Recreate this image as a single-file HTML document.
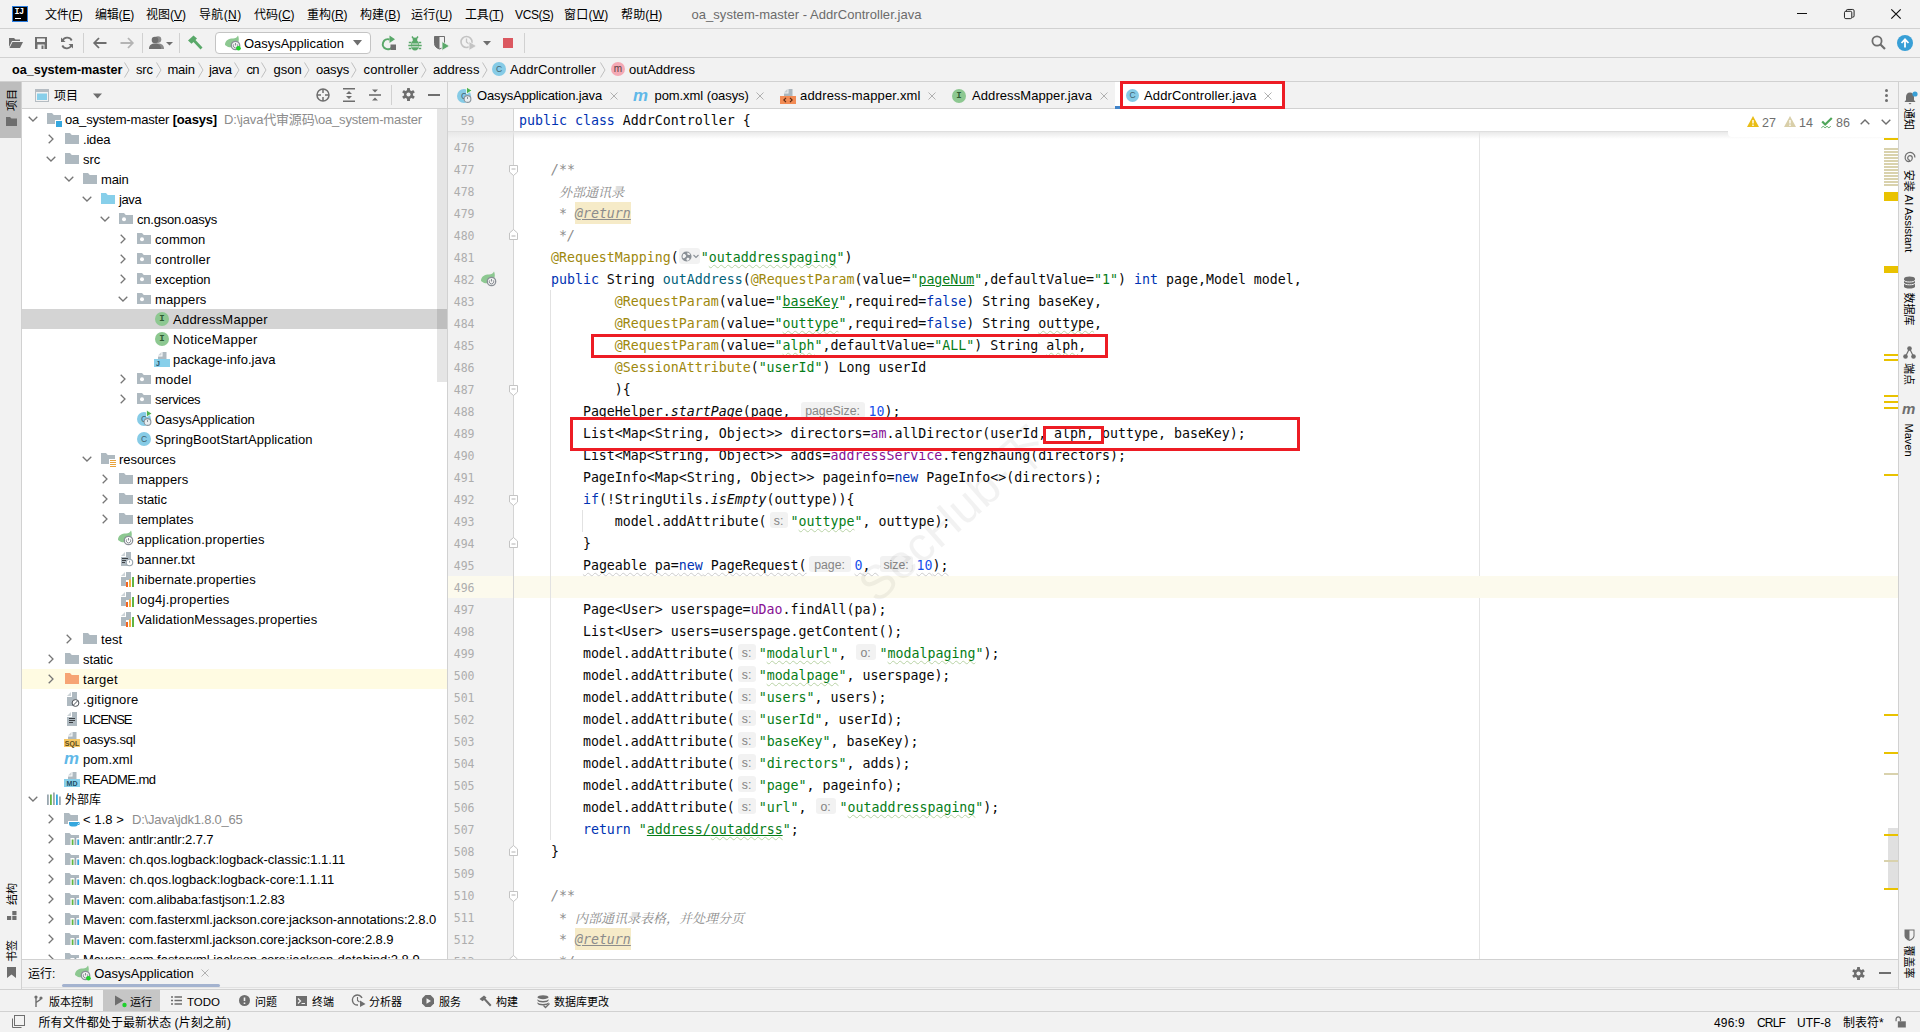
<!DOCTYPE html><html><head><meta charset="utf-8"><title>oa_system-master - AddrController.java</title><style>
*{box-sizing:border-box}
html,body{margin:0;padding:0}
body{width:1920px;height:1032px;overflow:hidden;position:relative;background:#f2f2f2;
 font-family:"Liberation Sans","Noto Sans CJK SC",sans-serif;font-size:12px;color:#000;}
.a{position:absolute}
.t{position:absolute;white-space:pre;line-height:20px;height:20px}
.ui{font-size:13px}
.hl{position:absolute;background:#d1d1d1}
.vl{position:absolute;background:#d1d1d1;width:1px}
svg{position:absolute;overflow:visible}
.row{position:absolute;left:22px;width:426px;height:20px}
.mono{font-family:"Liberation Mono","Noto Sans CJK SC",monospace}
.cl{position:absolute;left:519px;height:22px;line-height:22px;white-space:pre;font-family:"DejaVu Sans Mono","Liberation Mono","Noto Sans CJK SC",monospace;font-size:13.288px;color:#080808;margin-top:1px}
.lnum{position:absolute;left:448px;width:26.500px;text-align:right;height:22px;line-height:22px;font-family:"DejaVu Sans Mono","Liberation Mono",monospace;font-size:11.5px;color:#adadad;white-space:pre;margin-top:1px}
.k{color:#0033b3}.s{color:#067d17}.an{color:#9e880d}.f{color:#871094}.c{color:#8c8c8c;font-style:italic}.n{color:#1750eb}.m{color:#00627a}
.i{font-style:italic}
.u{text-decoration:underline}
.w{text-decoration:underline wavy #b9d3a6;text-decoration-thickness:1px;text-underline-offset:1.500px;text-decoration-skip-ink:none}
.wg{text-decoration:underline wavy #cccccc;text-decoration-thickness:1px;text-underline-offset:1.500px;text-decoration-skip-ink:none}
.hint{display:inline-block;vertical-align:top;height:22px;position:relative}
.hint b{position:absolute;top:1px;height:16px;line-height:19px;background:#f2f2f2;border-radius:3px;color:#858585;font-weight:normal;font-family:"Liberation Sans",sans-serif;font-size:12.300px;text-align:center;font-style:normal}
.red{position:absolute;border:3px solid #ed1c24}
.vt{position:absolute;white-space:pre;writing-mode:vertical-rl;font-size:12px;line-height:22px;width:22px;text-align:left}
</style></head><body>
<div class="a" style="left:0;top:0;width:1920px;height:28px;background:#f2f2f2"></div>
<div class="hl" style="left:0;top:28px;width:1920px;height:1px"></div>
<div class="a" style="left:12px;top:6px;width:16px;height:16px;background:#000;border:1px solid #2b7de0"></div>
<div class="a" style="left:14.500px;top:8px;font-family:'Liberation Mono',monospace;font-size:8.500px;line-height:8px;color:#fff;font-weight:bold;letter-spacing:-0.500px">IJ</div>
<div class="a" style="left:15px;top:18px;width:6px;height:1px;background:#fff"></div>
<div class="t " style="left:45px;top:4.9px;font-size:12px;letter-spacing:-0.369px">文件(<u>F</u>)</div>
<div class="t " style="left:95px;top:4.9px;font-size:12px;letter-spacing:-0.203px">编辑(<u>E</u>)</div>
<div class="t " style="left:146px;top:4.9px;font-size:12px;letter-spacing:-0.003px">视图(<u>V</u>)</div>
<div class="t " style="left:199px;top:4.9px;font-size:12px;letter-spacing:0.366px">导航(<u>N</u>)</div>
<div class="t " style="left:254px;top:4.9px;font-size:12px;letter-spacing:-0.034px">代码(<u>C</u>)</div>
<div class="t " style="left:307px;top:4.9px;font-size:12px;letter-spacing:-0.034px">重构(<u>R</u>)</div>
<div class="t " style="left:360px;top:4.9px;font-size:12px;letter-spacing:0.097px">构建(<u>B</u>)</div>
<div class="t " style="left:411px;top:4.9px;font-size:12px;letter-spacing:0.166px">运行(<u>U</u>)</div>
<div class="t " style="left:465px;top:4.9px;font-size:12px;letter-spacing:-0.169px">工具(<u>T</u>)</div>
<div class="t " style="left:515px;top:4.9px;font-size:12px;letter-spacing:-0.365px">VCS(<u>S</u>)</div>
<div class="t " style="left:564px;top:4.9px;font-size:12px;letter-spacing:0.234px">窗口(<u>W</u>)</div>
<div class="t " style="left:621px;top:4.9px;font-size:12px;letter-spacing:0.166px">帮助(<u>H</u>)</div>
<div class="t " style="left:691.5px;top:5px;font-size:13px;color:#6b6b6b;letter-spacing:0.044px">oa_system-master - AddrController.java</div>
<div class="a" style="left:1797px;top:13px;width:10px;height:1px;background:#111"></div>
<svg style="left:1843.5px;top:8.500px" width="11" height="11" viewBox="0 0 12 12"><rect x="0.5" y="2.5" width="8" height="8" rx="1.5" fill="none" stroke="#111"/><path d="M2.5 2.5V2a1.5 1.5 0 0 1 1.5-1.5h5.5A1.5 1.5 0 0 1 11 2v5.5A1.5 1.5 0 0 1 9.5 9H9" fill="none" stroke="#111"/></svg>
<svg style="left:1891px;top:9px" width="10" height="10" viewBox="0 0 10 10"><path d="M0.3 0.3L9.7 9.7M9.7 0.3L0.3 9.7" stroke="#111" stroke-width="1.2"/></svg>
<div class="hl" style="left:0;top:57px;width:1920px;height:1px"></div>
<svg style="left:9px;top:37px" width="14" height="12" viewBox="0 0 14 12"><path d="M0 1h5l1.5 1.5H11V4H3L0 10z" fill="#6e6e6e"/><path d="M3.5 5H14l-3 6H0.5z" fill="#6e6e6e"/></svg>
<svg style="left:35px;top:37px" width="12" height="12" viewBox="0 0 12 12"><path d="M0 0h12v12H0z M2 1.5v3.5h8V1.5z M2.5 7.5V12h7V7.5z" fill="#6e6e6e" fill-rule="evenodd"/><rect x="6.5" y="8.5" width="2" height="3.5" fill="#6e6e6e"/></svg>
<svg style="left:60px;top:36px;transform:scaleX(-1)" width="14" height="14" viewBox="0 0 14 14"><path d="M11.5 5A5 5 0 0 0 2.3 4.5" fill="none" stroke="#6e6e6e" stroke-width="1.8"/><path d="M2.5 9A5 5 0 0 0 11.7 9.5" fill="none" stroke="#6e6e6e" stroke-width="1.8"/><path d="M13 1.5V6H8.5z" fill="#6e6e6e"/><path d="M1 12.5V8h4.5z" fill="#6e6e6e"/></svg>
<div class="vl" style="left:83px;top:33px;height:20px"></div>
<svg style="left:93px;top:37px" width="14" height="12" viewBox="0 0 14 12"><path d="M6 1L1.2 6L6 11M1.5 6H13.5" fill="none" stroke="#6e6e6e" stroke-width="1.8"/></svg>
<svg style="left:120px;top:37px" width="14" height="12" viewBox="0 0 14 12"><path d="M8 1L12.8 6L8 11M12.5 6H0.5" fill="none" stroke="#b4b4b4" stroke-width="1.8"/></svg>
<div class="vl" style="left:142px;top:33px;height:20px"></div>
<svg style="left:149px;top:36px" width="26" height="13" viewBox="0 0 26 13"><circle cx="9" cy="3.6" r="3.3" fill="#8a8a8a"/><path d="M3 13c0-4 2.5-5.5 6-5.5s6 1.5 6 5.5z" fill="#8a8a8a"/><circle cx="6" cy="4" r="3.3" fill="#6e6e6e"/><path d="M0 13c0-4 2.5-5.5 6-5.5s6 1.5 6 5.5z" fill="#6e6e6e"/><path d="M17 6h7l-3.5 3.5z" fill="#6e6e6e"/></svg>
<div class="vl" style="left:179px;top:33px;height:20px"></div>
<svg style="left:187px;top:35px" width="17" height="16" viewBox="0 0 17 16"><path d="M1 5.5L6.5 0.5L10 3.5L8.5 5L15.5 12.5L13.5 14.5L6.5 7L4.5 8.8z" fill="#59a869"/></svg>
<div class="a" style="left:215px;top:32px;width:156px;height:22px;background:#fff;border:1px solid #c4c4c4;border-radius:4px"></div>
<svg style="left:224px;top:35px" width="18" height="16" viewBox="0 0 18 16"><path d="M1 10C1 5 5 3.5 9 3.5C11.5 3.5 13 2.5 14 0.5C15.5 4 15 8 12 10.5C9 13 4 12.5 2.5 11z" fill="#8dc891"/><circle cx="11.5" cy="10.5" r="4.2" fill="#f2f2f2" stroke="#8a8f96" stroke-width="1.3"/><path d="M11.5 8v2.5M9.8 9.3a2.2 2.2 0 1 0 3.4 0" fill="none" stroke="#8a8f96" stroke-width="1"/><circle cx="14.5" cy="13.2" r="2.3" fill="#1fd12c"/></svg>
<div class="t " style="left:244px;top:34px;font-size:13px;letter-spacing:-0.028px">OasysApplication</div>
<svg style="left:353px;top:40px" width="9" height="6" viewBox="0 0 9 6"><path d="M0 0h9L4.5 5.5z" fill="#6e6e6e"/></svg>
<svg style="left:382px;top:35px" width="15" height="15" viewBox="0 0 15 15"><path d="M9 3.5A5 5 0 1 0 12 10" fill="none" stroke="#59a869" stroke-width="2" transform="translate(-1.5,1)"/><path d="M7.5 0L13 3.8L7.5 7.5z" fill="#59a869" transform="translate(0,0.5)"/><rect x="8.5" y="9.5" width="5.5" height="5.5" fill="#6e6e6e"/></svg>
<svg style="left:408px;top:35.500px" width="14" height="15" viewBox="0 0 14 15"><path d="M4 0.500L5.800 3M10 0.500L8.200 3" stroke="#59a869" stroke-width="1.400"/><circle cx="7" cy="4" r="2.400" fill="#59a869"/><ellipse cx="7" cy="9.300" rx="4.200" ry="5.200" fill="#59a869"/><path d="M0.800 6.500h2.500M10.700 6.500h2.500M0.300 9.500h2.700M11 9.500h2.700M0.800 12.500h2.500M10.700 12.500h2.500" stroke="#59a869" stroke-width="1.500"/><path d="M3.600 8h6.800M3.300 10.800h7.400" stroke="#f2f2f2" stroke-width="0.900"/></svg>
<svg style="left:434px;top:35px" width="16" height="16" viewBox="0 0 16 16"><path d="M0.5 1.5h10v7c0 3-2.5 4.8-5 5.5c-2.5-0.7-5-2.5-5-5.5z" fill="#6e6e6e"/><path d="M5.5 1.5h5v7c0 3-2.5 4.8-5 5.5z" fill="#f2f2f2"/><path d="M0.5 1.5h10v7c0 3-2.5 4.8-5 5.5c-2.5-0.7-5-2.5-5-5.5z" fill="none" stroke="#6e6e6e" stroke-width="1"/><path d="M8 6.5L15.5 11L8 15.5z" fill="#59a869" stroke="#f2f2f2" stroke-width="0.8"/></svg>
<svg style="left:460px;top:35px" width="17" height="16" viewBox="0 0 17 16"><circle cx="6.5" cy="7" r="5.5" fill="none" stroke="#c3c3c3" stroke-width="1.6"/><path d="M6.5 3.5V7L9 9" fill="none" stroke="#c3c3c3" stroke-width="1.3"/><path d="M9 6.5L16.5 11L9 15.5z" fill="#c3c3c3" stroke="#f2f2f2" stroke-width="0.8"/></svg>
<svg style="left:483px;top:41px" width="8" height="5" viewBox="0 0 8 5"><path d="M0 0h8L4 4.5z" fill="#6e6e6e"/></svg>
<div class="a" style="left:503px;top:38px;width:10px;height:10px;background:#db5860"></div>
<div class="vl" style="left:524px;top:33px;height:20px"></div>
<svg style="left:1871px;top:35px" width="15" height="15" viewBox="0 0 15 15"><circle cx="6" cy="6" r="4.6" fill="none" stroke="#6e6e6e" stroke-width="1.8"/><path d="M9.5 9.5L14 14" stroke="#6e6e6e" stroke-width="2.2"/></svg>
<svg style="left:1897px;top:35px" width="16" height="16" viewBox="0 0 16 16"><circle cx="8" cy="8" r="8" fill="#389fd6"/><path d="M8 12.5V4.5M4.5 8L8 4.3L11.5 8" fill="none" stroke="#fff" stroke-width="1.8"/></svg>
<div class="hl" style="left:0;top:81px;width:1920px;height:1px"></div>
<div class="t " style="left:12px;top:60px;font-size:12.6px;font-weight:bold;letter-spacing:-0.019px">oa_system-master</div>
<div class="t " style="left:136px;top:60px;font-size:13px;letter-spacing:-0.181px">src</div>
<div class="t " style="left:167.5px;top:60px;font-size:13px;letter-spacing:-0.247px">main</div>
<div class="t " style="left:209px;top:60px;font-size:13px;letter-spacing:-0.315px">java</div>
<div class="t " style="left:246.5px;top:60px;font-size:13px;letter-spacing:-0.667px">cn</div>
<div class="t " style="left:273.5px;top:60px;font-size:13px;letter-spacing:0.024px">gson</div>
<div class="t " style="left:316px;top:60px;font-size:13px;letter-spacing:-0.194px">oasys</div>
<div class="t " style="left:363.5px;top:60px;font-size:13px;letter-spacing:0.153px">controller</div>
<div class="t " style="left:433px;top:60px;font-size:13px;letter-spacing:0.021px">address</div>
<svg style="left:124px;top:62px" width="6" height="16" viewBox="0 0 6 16"><path d="M0.5 0.5L5 8L0.5 15.5" fill="none" stroke="#c0c0c0" stroke-width="1"/></svg>
<svg style="left:156px;top:62px" width="6" height="16" viewBox="0 0 6 16"><path d="M0.5 0.5L5 8L0.5 15.5" fill="none" stroke="#c0c0c0" stroke-width="1"/></svg>
<svg style="left:198px;top:62px" width="6" height="16" viewBox="0 0 6 16"><path d="M0.5 0.5L5 8L0.5 15.5" fill="none" stroke="#c0c0c0" stroke-width="1"/></svg>
<svg style="left:234px;top:62px" width="6" height="16" viewBox="0 0 6 16"><path d="M0.5 0.5L5 8L0.5 15.5" fill="none" stroke="#c0c0c0" stroke-width="1"/></svg>
<svg style="left:261px;top:62px" width="6" height="16" viewBox="0 0 6 16"><path d="M0.5 0.5L5 8L0.5 15.5" fill="none" stroke="#c0c0c0" stroke-width="1"/></svg>
<svg style="left:304px;top:62px" width="6" height="16" viewBox="0 0 6 16"><path d="M0.5 0.5L5 8L0.5 15.5" fill="none" stroke="#c0c0c0" stroke-width="1"/></svg>
<svg style="left:351px;top:62px" width="6" height="16" viewBox="0 0 6 16"><path d="M0.5 0.5L5 8L0.5 15.5" fill="none" stroke="#c0c0c0" stroke-width="1"/></svg>
<svg style="left:421px;top:62px" width="6" height="16" viewBox="0 0 6 16"><path d="M0.5 0.5L5 8L0.5 15.5" fill="none" stroke="#c0c0c0" stroke-width="1"/></svg>
<svg style="left:482px;top:62px" width="6" height="16" viewBox="0 0 6 16"><path d="M0.5 0.5L5 8L0.5 15.5" fill="none" stroke="#c0c0c0" stroke-width="1"/></svg>
<svg style="left:600px;top:62px" width="6" height="16" viewBox="0 0 6 16"><path d="M0.5 0.5L5 8L0.5 15.5" fill="none" stroke="#c0c0c0" stroke-width="1"/></svg>
<div class="a" style="left:492px;top:62px;width:14px;height:14px;border-radius:50%;background:#86cbe6;color:#41626f;font-family:'Liberation Sans',monospace;font-size:8.5px;line-height:14px;text-align:center;font-weight:normal">C</div>
<div class="t " style="left:510px;top:60px;font-size:13px;letter-spacing:0.155px">AddrController</div>
<div class="a" style="left:611px;top:62px;width:14px;height:14px;border-radius:50%;background:#f4a9b4;color:#5a3f45;font-family:'Liberation Sans',monospace;font-size:10px;line-height:14px;text-align:center;font-weight:normal">m</div>
<div class="t " style="left:629px;top:60px;font-size:13px;letter-spacing:0.023px">outAddress</div>
<div class="a" style="left:0;top:82px;width:22px;height:905px;background:#f2f2f2"></div>
<div class="vl" style="left:21px;top:82px;height:907px"></div>
<div class="a" style="left:0;top:82px;width:21px;height:56px;background:#bdbdbd"></div>
<div class="a" style="left:0px;top:85px;width:22px;height:30px"><div class="a" style="left:11.5px;top:15px;transform:translate(-50%,-50%) rotate(-90deg);white-space:pre;font-size:11px;line-height:14px">项目</div></div>
<svg style="left:6px;top:117px" width="11" height="9" viewBox="0 0 11 9"><path d="M0 0h4l1.5 1.5H11V9H0z" fill="#6e6e6e"/></svg>
<div class="a" style="left:0px;top:880px;width:22px;height:28px"><div class="a" style="left:12.300px;top:14px;transform:translate(-50%,-50%) rotate(-90deg);white-space:pre;font-size:11px;line-height:14px">结构</div></div>
<svg style="left:7px;top:911px" width="10" height="9" viewBox="0 0 10 9"><rect x="5.300" y="0" width="4.200" height="4.200" fill="#6e6e6e"/><rect x="0" y="5" width="4.200" height="4" fill="#6e6e6e"/><rect x="5.300" y="5" width="4.200" height="4" fill="#6e6e6e"/></svg>
<div class="a" style="left:0px;top:937px;width:22px;height:28px"><div class="a" style="left:12.300px;top:14px;transform:translate(-50%,-50%) rotate(-90deg);white-space:pre;font-size:11px;line-height:14px">书签</div></div>
<svg style="left:7px;top:967px" width="9" height="11" viewBox="0 0 9 11"><path d="M0 0h9v11L4.5 7.5L0 11z" fill="#6e6e6e"/></svg>
<div class="a" style="left:22px;top:82px;width:426px;height:27px;background:#f2f2f2"></div>
<div class="hl" style="left:22px;top:108px;width:426px;height:1px"></div>
<div class="a" style="left:22px;top:109px;width:425px;height:851px;background:#fff"></div>
<div class="vl" style="left:447px;top:82px;height:878px"></div>
<svg style="left:35px;top:89px" width="14" height="13" viewBox="0 0 14 13"><rect x="0.5" y="0.5" width="13" height="12" fill="#f2f2f2" stroke="#b5bcc2"/><rect x="0" y="0" width="14" height="3" fill="#b5bcc2"/><rect x="2" y="4.5" width="10" height="6.5" fill="#87cfea"/></svg>
<div class="t " style="left:54px;top:86px;font-size:12px">项目</div>
<svg style="left:93px;top:93px" width="9" height="6" viewBox="0 0 9 6"><path d="M0 0.5h9L4.5 5.5z" fill="#6e6e6e"/></svg>
<svg style="left:316px;top:88px" width="14" height="14" viewBox="0 0 14 14"><circle cx="7" cy="7" r="6" fill="none" stroke="#6e6e6e" stroke-width="1.5"/><path d="M7 1v4M7 9v4M1 7h4M9 7h4" stroke="#6e6e6e" stroke-width="1.5"/></svg>
<svg style="left:343px;top:88px" width="12" height="14" viewBox="0 0 12 14"><path d="M0 0.8h12M0 13.2h12" stroke="#6e6e6e" stroke-width="1.6"/><path d="M3 6L6 3L9 6zM3 8L6 11L9 8z" fill="#6e6e6e"/></svg>
<svg style="left:369px;top:88px" width="12" height="14" viewBox="0 0 12 14"><path d="M0 7h12" stroke="#6e6e6e" stroke-width="1.6"/><path d="M3 1.5L6 4.5L9 1.5zM3 12.5L6 9.5L9 12.5z" fill="#6e6e6e"/></svg>
<div class="vl" style="left:391px;top:85px;height:20px"></div>
<svg style="left:402px;top:88px" width="13" height="13" viewBox="0 0 14 14"><g fill="#6e6e6e"><circle cx="7" cy="7" r="4.8"/><rect x="5.4" y="0" width="3.2" height="14" rx="0.6" transform="rotate(0 7 7)"/><rect x="5.4" y="0" width="3.2" height="14" rx="0.6" transform="rotate(60 7 7)"/><rect x="5.4" y="0" width="3.2" height="14" rx="0.6" transform="rotate(120 7 7)"/></g><circle cx="7" cy="7" r="2.2" fill="#f2f2f2"/></svg>
<div class="a" style="left:428px;top:94px;width:12px;height:2px;background:#6e6e6e"></div>
<div class="a" id="tree" style="left:0;top:0;width:448px;height:959px;overflow:hidden">
<svg style="left:28px;top:116px" width="10" height="6" viewBox="0 0 10 6"><path d="M0.7 0.7L5 5L9.3 0.7" fill="none" stroke="#767676" stroke-width="1.3"/></svg>
<svg style="left:47px;top:113px" width="14" height="11" viewBox="0 0 14 11"><path d="M0 0h5l1.8 2H14v9H0z" fill="#aeb9c0"/></svg><div class="a" style="left:55px;top:120px;width:7px;height:7px;background:#fff"></div><div class="a" style="left:56px;top:121px;width:6px;height:6px;background:#35a7de"></div>
<div class="t " style="left:65px;top:110px;font-size:13px;letter-spacing:-0.17px">oa_system-master <b>[oasys]</b></div>
<div class="t " style="left:224px;top:110px;font-size:13px;color:#8c8c8c;letter-spacing:-0.179px">D:\java代审源码\oa_system-master</div>
<svg style="left:48px;top:134px" width="6" height="10" viewBox="0 0 6 10"><path d="M0.7 0.7L5 5L0.7 9.3" fill="none" stroke="#767676" stroke-width="1.3"/></svg>
<svg style="left:65px;top:133px" width="14" height="11" viewBox="0 0 14 11"><path d="M0 0h5l1.8 2H14v9H0z" fill="#aeb9c0"/></svg>
<div class="t " style="left:83px;top:130px;font-size:13px;letter-spacing:-0.201px">.idea</div>
<svg style="left:46px;top:156px" width="10" height="6" viewBox="0 0 10 6"><path d="M0.7 0.7L5 5L9.3 0.7" fill="none" stroke="#767676" stroke-width="1.3"/></svg>
<svg style="left:65px;top:153px" width="14" height="11" viewBox="0 0 14 11"><path d="M0 0h5l1.8 2H14v9H0z" fill="#aeb9c0"/></svg>
<div class="t " style="left:83px;top:150px;font-size:13px;letter-spacing:-0.081px">src</div>
<svg style="left:64px;top:176px" width="10" height="6" viewBox="0 0 10 6"><path d="M0.7 0.7L5 5L9.3 0.7" fill="none" stroke="#767676" stroke-width="1.3"/></svg>
<svg style="left:83px;top:173px" width="14" height="11" viewBox="0 0 14 11"><path d="M0 0h5l1.8 2H14v9H0z" fill="#aeb9c0"/></svg>
<div class="t " style="left:101px;top:170px;font-size:13px;letter-spacing:-0.172px">main</div>
<svg style="left:82px;top:196px" width="10" height="6" viewBox="0 0 10 6"><path d="M0.7 0.7L5 5L9.3 0.7" fill="none" stroke="#767676" stroke-width="1.3"/></svg>
<svg style="left:101px;top:193px" width="14" height="11" viewBox="0 0 14 11"><path d="M0 0h5l1.8 2H14v9H0z" fill="#87cfea"/></svg>
<div class="t " style="left:119px;top:190px;font-size:13px;letter-spacing:-0.39px">java</div>
<svg style="left:100px;top:216px" width="10" height="6" viewBox="0 0 10 6"><path d="M0.7 0.7L5 5L9.3 0.7" fill="none" stroke="#767676" stroke-width="1.3"/></svg>
<svg style="left:119px;top:213px" width="14" height="11" viewBox="0 0 14 11"><path d="M0 0h5l1.8 2H14v9H0z" fill="#aeb9c0"/><circle cx="5" cy="6.3" r="2" fill="#fff"/></svg>
<div class="t " style="left:137px;top:210px;font-size:13px;letter-spacing:-0.231px">cn.gson.oasys</div>
<svg style="left:120px;top:234px" width="6" height="10" viewBox="0 0 6 10"><path d="M0.7 0.7L5 5L0.7 9.3" fill="none" stroke="#767676" stroke-width="1.3"/></svg>
<svg style="left:137px;top:233px" width="14" height="11" viewBox="0 0 14 11"><path d="M0 0h5l1.8 2H14v9H0z" fill="#aeb9c0"/><circle cx="5" cy="6.3" r="2" fill="#fff"/></svg>
<div class="t " style="left:155px;top:230px;font-size:13px;letter-spacing:0.073px">common</div>
<svg style="left:120px;top:254px" width="6" height="10" viewBox="0 0 6 10"><path d="M0.7 0.7L5 5L0.7 9.3" fill="none" stroke="#767676" stroke-width="1.3"/></svg>
<svg style="left:137px;top:253px" width="14" height="11" viewBox="0 0 14 11"><path d="M0 0h5l1.8 2H14v9H0z" fill="#aeb9c0"/><circle cx="5" cy="6.3" r="2" fill="#fff"/></svg>
<div class="t " style="left:155px;top:250px;font-size:13px;letter-spacing:0.213px">controller</div>
<svg style="left:120px;top:274px" width="6" height="10" viewBox="0 0 6 10"><path d="M0.7 0.7L5 5L0.7 9.3" fill="none" stroke="#767676" stroke-width="1.3"/></svg>
<svg style="left:137px;top:273px" width="14" height="11" viewBox="0 0 14 11"><path d="M0 0h5l1.8 2H14v9H0z" fill="#aeb9c0"/><circle cx="5" cy="6.3" r="2" fill="#fff"/></svg>
<div class="t " style="left:155px;top:270px;font-size:13px;letter-spacing:-0.006px">exception</div>
<svg style="left:118px;top:296px" width="10" height="6" viewBox="0 0 10 6"><path d="M0.7 0.7L5 5L9.3 0.7" fill="none" stroke="#767676" stroke-width="1.3"/></svg>
<svg style="left:137px;top:293px" width="14" height="11" viewBox="0 0 14 11"><path d="M0 0h5l1.8 2H14v9H0z" fill="#aeb9c0"/><circle cx="5" cy="6.3" r="2" fill="#fff"/></svg>
<div class="t " style="left:155px;top:290px;font-size:13px;letter-spacing:0.132px">mappers</div>
<div class="a" style="left:22px;top:309px;width:425px;height:20px;background:#d4d4d4"></div>
<div class="a" style="left:155px;top:312px;width:14px;height:14px;border-radius:50%;background:#8dc891;color:#2d5c33;font-family:'Liberation Mono',monospace;font-size:9px;line-height:14px;text-align:center;font-weight:bold">I</div>
<div class="t " style="left:173px;top:310px;font-size:13px;letter-spacing:0.24px">AddressMapper</div>
<div class="a" style="left:155px;top:332px;width:14px;height:14px;border-radius:50%;background:#8dc891;color:#2d5c33;font-family:'Liberation Mono',monospace;font-size:9px;line-height:14px;text-align:center;font-weight:bold">I</div>
<div class="t " style="left:173px;top:330px;font-size:13px;letter-spacing:0.314px">NoticeMapper</div>
<svg style="left:154px;top:351px" width="16" height="16" viewBox="0 0 16 16"><path d="M8.500 1h4v7H4V5.500h4.500z" fill="#9aa7b0" opacity="0.8"/><path d="M7.500 1L4 4.500h3.500z" fill="#9aa7b0" opacity="0.5"/><rect x="0" y="8" width="16" height="8" fill="#87cfea"/><text x="4" y="15" font-family="Liberation Sans,sans-serif" font-size="7" font-weight="bold" fill="#1f4e66" text-anchor="middle">J</text></svg>
<div class="t " style="left:173px;top:350px;font-size:13px;letter-spacing:0.041px">package-info.java</div>
<svg style="left:120px;top:374px" width="6" height="10" viewBox="0 0 6 10"><path d="M0.7 0.7L5 5L0.7 9.3" fill="none" stroke="#767676" stroke-width="1.3"/></svg>
<svg style="left:137px;top:373px" width="14" height="11" viewBox="0 0 14 11"><path d="M0 0h5l1.8 2H14v9H0z" fill="#aeb9c0"/><circle cx="5" cy="6.3" r="2" fill="#fff"/></svg>
<div class="t " style="left:155px;top:370px;font-size:13px;letter-spacing:0.236px">model</div>
<svg style="left:120px;top:394px" width="6" height="10" viewBox="0 0 6 10"><path d="M0.7 0.7L5 5L0.7 9.3" fill="none" stroke="#767676" stroke-width="1.3"/></svg>
<svg style="left:137px;top:393px" width="14" height="11" viewBox="0 0 14 11"><path d="M0 0h5l1.8 2H14v9H0z" fill="#aeb9c0"/><circle cx="5" cy="6.3" r="2" fill="#fff"/></svg>
<div class="t " style="left:155px;top:390px;font-size:13px;letter-spacing:-0.298px">services</div>
<div class="a" style="left:137px;top:411.5px;width:14px;height:14px;border-radius:50%;background:#86cbe6;color:#41626f;font-family:'Liberation Sans',monospace;font-size:8.5px;line-height:14px;text-align:center;font-weight:normal">C</div><svg style="left:142px;top:410px" width="11" height="18" viewBox="0 0 11 18"><path d="M4.5 0L10 3.5L4.5 7z" fill="#4fb04f" stroke="#fff" stroke-width="0.8"/><circle cx="5.5" cy="12" r="3.4" fill="#e9eef1" stroke="#8a949c" stroke-width="1.1"/><path d="M5.5 10v2" stroke="#8a949c"/></svg>
<div class="t " style="left:155px;top:410px;font-size:13px;letter-spacing:-0.041px">OasysApplication</div>
<div class="a" style="left:137px;top:431.5px;width:14px;height:14px;border-radius:50%;background:#86cbe6;color:#41626f;font-family:'Liberation Sans',monospace;font-size:8.5px;line-height:14px;text-align:center;font-weight:normal">C</div>
<div class="t " style="left:155px;top:430px;font-size:13px;letter-spacing:0.082px">SpringBootStartApplication</div>
<svg style="left:82px;top:456px" width="10" height="6" viewBox="0 0 10 6"><path d="M0.7 0.7L5 5L9.3 0.7" fill="none" stroke="#767676" stroke-width="1.3"/></svg>
<svg style="left:101px;top:453px" width="14" height="11" viewBox="0 0 14 11"><path d="M0 0h5l1.8 2H14v9H0z" fill="#aeb9c0"/></svg><svg style="left:109px;top:459px" width="7" height="8" viewBox="0 0 7 8"><rect width="7" height="8" fill="#fff"/><path d="M1 1.5h6M1 3.5h6M1 5.5h6M1 7.5h6" stroke="#e8a33d" stroke-width="1"/></svg>
<div class="t " style="left:119px;top:450px;font-size:13px;letter-spacing:-0.053px">resources</div>
<svg style="left:102px;top:474px" width="6" height="10" viewBox="0 0 6 10"><path d="M0.7 0.7L5 5L0.7 9.3" fill="none" stroke="#767676" stroke-width="1.3"/></svg>
<svg style="left:119px;top:473px" width="14" height="11" viewBox="0 0 14 11"><path d="M0 0h5l1.8 2H14v9H0z" fill="#aeb9c0"/></svg>
<div class="t " style="left:137px;top:470px;font-size:13px;letter-spacing:0.103px">mappers</div>
<svg style="left:102px;top:494px" width="6" height="10" viewBox="0 0 6 10"><path d="M0.7 0.7L5 5L0.7 9.3" fill="none" stroke="#767676" stroke-width="1.3"/></svg>
<svg style="left:119px;top:493px" width="14" height="11" viewBox="0 0 14 11"><path d="M0 0h5l1.8 2H14v9H0z" fill="#aeb9c0"/></svg>
<div class="t " style="left:137px;top:490px;font-size:13px;letter-spacing:-0.091px">static</div>
<svg style="left:102px;top:514px" width="6" height="10" viewBox="0 0 6 10"><path d="M0.7 0.7L5 5L0.7 9.3" fill="none" stroke="#767676" stroke-width="1.3"/></svg>
<svg style="left:119px;top:513px" width="14" height="11" viewBox="0 0 14 11"><path d="M0 0h5l1.8 2H14v9H0z" fill="#aeb9c0"/></svg>
<div class="t " style="left:137px;top:510px;font-size:13px;letter-spacing:0.014px">templates</div>
<svg style="left:117px;top:530px" width="18" height="16" viewBox="0 0 18 16"><path d="M1 10C1 5 5 3.5 9 3.5C11.5 3.5 13 2.5 14 0.5C15.5 4 15 8 12 10.5C9 13 4 12.5 2.5 11z" fill="#8dc891"/><circle cx="11.5" cy="10.5" r="4.2" fill="#fff" stroke="#8a8f96" stroke-width="1.3"/><path d="M11.5 8v2.5M9.8 9.3a2.2 2.2 0 1 0 3.4 0" fill="none" stroke="#8a8f96" stroke-width="1"/></svg>
<div class="t " style="left:137px;top:530px;font-size:13px;letter-spacing:0.187px">application.properties</div>
<svg style="left:118px;top:551px" width="16" height="16" viewBox="0 0 16 16"><path d="M8 1h5v14H3V6h5z" fill="#9aa7b0" opacity="0.8"/><path d="M7 1L3 5h4z" fill="#9aa7b0" opacity="0.5"/><path d="M4 7.500h6M4 9.500h4M4 11.500h3" stroke="#3b3f44" stroke-width="1"/><circle cx="11.5" cy="11.5" r="3.2" fill="#fff" stroke="#9aa7b0" stroke-width="1.1"/><path d="M11.5 9.8v1.8" stroke="#9aa7b0"/></svg>
<div class="t " style="left:137px;top:550px;font-size:13px;letter-spacing:0.079px">banner.txt</div>
<svg style="left:118px;top:571px" width="16" height="16" viewBox="0 0 16 16"><path d="M8 1h5v8H8v6H3V6h5z" fill="#9aa7b0" opacity="0.8"/><path d="M7 1L3 5h4z" fill="#9aa7b0" opacity="0.5"/><rect x="8" y="11" width="2" height="5" fill="#f26522"/><rect x="11" y="8.5" width="2" height="7.5" fill="#f4af3d"/><rect x="14" y="6" width="2" height="10" fill="#62b543"/></svg>
<div class="t " style="left:137px;top:570px;font-size:13px;letter-spacing:0.158px">hibernate.properties</div>
<svg style="left:118px;top:591px" width="16" height="16" viewBox="0 0 16 16"><path d="M8 1h5v8H8v6H3V6h5z" fill="#9aa7b0" opacity="0.8"/><path d="M7 1L3 5h4z" fill="#9aa7b0" opacity="0.5"/><rect x="8" y="11" width="2" height="5" fill="#f26522"/><rect x="11" y="8.5" width="2" height="7.5" fill="#f4af3d"/><rect x="14" y="6" width="2" height="10" fill="#62b543"/></svg>
<div class="t " style="left:137px;top:590px;font-size:13px;letter-spacing:0.232px">log4j.properties</div>
<svg style="left:118px;top:611px" width="16" height="16" viewBox="0 0 16 16"><path d="M8 1h5v8H8v6H3V6h5z" fill="#9aa7b0" opacity="0.8"/><path d="M7 1L3 5h4z" fill="#9aa7b0" opacity="0.5"/><rect x="8" y="11" width="2" height="5" fill="#f26522"/><rect x="11" y="8.5" width="2" height="7.5" fill="#f4af3d"/><rect x="14" y="6" width="2" height="10" fill="#62b543"/></svg>
<div class="t " style="left:137px;top:610px;font-size:13px;letter-spacing:0.12px">ValidationMessages.properties</div>
<svg style="left:66px;top:634px" width="6" height="10" viewBox="0 0 6 10"><path d="M0.7 0.7L5 5L0.7 9.3" fill="none" stroke="#767676" stroke-width="1.3"/></svg>
<svg style="left:83px;top:633px" width="14" height="11" viewBox="0 0 14 11"><path d="M0 0h5l1.8 2H14v9H0z" fill="#aeb9c0"/></svg>
<div class="t " style="left:101px;top:630px;font-size:13px;letter-spacing:0.058px">test</div>
<svg style="left:48px;top:654px" width="6" height="10" viewBox="0 0 6 10"><path d="M0.7 0.7L5 5L0.7 9.3" fill="none" stroke="#767676" stroke-width="1.3"/></svg>
<svg style="left:65px;top:653px" width="14" height="11" viewBox="0 0 14 11"><path d="M0 0h5l1.8 2H14v9H0z" fill="#aeb9c0"/></svg>
<div class="t " style="left:83px;top:650px;font-size:13px;letter-spacing:-0.091px">static</div>
<div class="a" style="left:22px;top:669px;width:425px;height:20px;background:#fffbe2"></div>
<svg style="left:48px;top:674px" width="6" height="10" viewBox="0 0 6 10"><path d="M0.7 0.7L5 5L0.7 9.3" fill="none" stroke="#767676" stroke-width="1.3"/></svg>
<svg style="left:65px;top:673px" width="14" height="11" viewBox="0 0 14 11"><path d="M0 0h5l1.8 2H14v9H0z" fill="#f6a474"/></svg>
<div class="t " style="left:83px;top:670px;font-size:13px;letter-spacing:0.275px">target</div>
<svg style="left:64px;top:691px" width="16" height="16" viewBox="0 0 16 16"><path d="M8 1h5v14H3V6h5z" fill="#9aa7b0" opacity="0.8"/><path d="M7 1L3 5h4z" fill="#9aa7b0" opacity="0.5"/><circle cx="11.5" cy="12" r="3.4" fill="#fff" stroke="#4a4f55" stroke-width="1"/><path d="M9.2 14.3L13.8 9.7" stroke="#4a4f55" stroke-width="1"/></svg>
<div class="t " style="left:83px;top:690px;font-size:13px;letter-spacing:0.202px">.gitignore</div>
<svg style="left:64px;top:711px" width="16" height="16" viewBox="0 0 16 16"><path d="M8 1h5v14H3V6h5z" fill="#9aa7b0" opacity="0.8"/><path d="M7 1L3 5h4z" fill="#9aa7b0" opacity="0.5"/><path d="M5 7.500h6M5 9.500h6M5 11.500h4" stroke="#3b3f44" stroke-width="1"/></svg>
<div class="t " style="left:83px;top:710px;font-size:13px;letter-spacing:-1.02px">LICENSE</div>
<svg style="left:64px;top:731px" width="16" height="16" viewBox="0 0 16 16"><path d="M8.500 1h4v7H4V5.500h4.500z" fill="#9aa7b0" opacity="0.8"/><path d="M7.500 1L4 4.500h3.500z" fill="#9aa7b0" opacity="0.5"/><rect x="0" y="8" width="16" height="8" fill="#f4c766"/><text x="8" y="15" font-family="Liberation Sans,sans-serif" font-size="7" font-weight="bold" fill="#5a4a1a" text-anchor="middle">SQL</text></svg>
<div class="t " style="left:83px;top:730px;font-size:13px;letter-spacing:-0.189px">oasys.sql</div>
<svg style="left:64px;top:751px" width="16" height="16" viewBox="0 0 16 16"><text x="0" y="13" font-family="Liberation Sans,sans-serif" font-size="17" font-style="italic" font-weight="bold" fill="#5fb8e8" textLength="15" lengthAdjust="spacingAndGlyphs">m</text></svg>
<div class="t " style="left:83px;top:750px;font-size:13px;letter-spacing:0.082px">pom.xml</div>
<svg style="left:64px;top:771px" width="16" height="16" viewBox="0 0 16 16"><path d="M8.500 1h4v7H4V5.500h4.500z" fill="#9aa7b0" opacity="0.8"/><path d="M7.500 1L4 4.500h3.500z" fill="#9aa7b0" opacity="0.5"/><rect x="0" y="8" width="16" height="8" fill="#87cfea"/><text x="8" y="15" font-family="Liberation Sans,sans-serif" font-size="7" font-weight="bold" fill="#1f4e66" text-anchor="middle">MD</text></svg>
<div class="t " style="left:83px;top:770px;font-size:13px;letter-spacing:-0.533px">README.md</div>
<svg style="left:28px;top:796px" width="10" height="6" viewBox="0 0 10 6"><path d="M0.7 0.7L5 5L9.3 0.7" fill="none" stroke="#767676" stroke-width="1.3"/></svg>
<svg style="left:46px;top:791px" width="16" height="16" viewBox="0 0 16 16"><rect x="1" y="3.500" width="1.800" height="10.500" fill="#9aa7b0"/><rect x="4" y="3.500" width="1.800" height="10.500" fill="#62b543"/><rect x="7" y="1.500" width="1.800" height="12.500" fill="#9aa7b0"/><rect x="10" y="3.500" width="1.800" height="10.500" fill="#35a7de"/><rect x="13" y="5.500" width="1.800" height="8.500" fill="#9aa7b0"/></svg>
<div class="t " style="left:65px;top:790px;font-size:12px;letter-spacing:-0.005px">外部库</div>
<svg style="left:48px;top:814px" width="6" height="10" viewBox="0 0 6 10"><path d="M0.7 0.7L5 5L0.7 9.3" fill="none" stroke="#767676" stroke-width="1.3"/></svg>
<svg style="left:64px;top:811px" width="16" height="16" viewBox="0 0 16 16"><path d="M0 2h5l1.8 2H14v6H4v3H0z" fill="#aeb9c0"/><path d="M5 11h9v1.5a3 3 0 0 1-3 3H8a3 3 0 0 1-3-3z" fill="#35a7de"/><path d="M14 11.5h1.2v2H14" fill="none" stroke="#35a7de" stroke-width="1"/></svg>
<div class="t " style="left:83px;top:810px;font-size:13px;letter-spacing:0.074px">&lt; 1.8 &gt;</div>
<div class="t " style="left:132px;top:810px;font-size:13px;color:#8c8c8c;letter-spacing:-0.232px">D:\Java\jdk1.8.0_65</div>
<svg style="left:48px;top:834px" width="6" height="10" viewBox="0 0 6 10"><path d="M0.7 0.7L5 5L0.7 9.3" fill="none" stroke="#767676" stroke-width="1.3"/></svg>
<svg style="left:64px;top:831px" width="16" height="16" viewBox="0 0 16 16"><path d="M1 2h4.500l1.800 2H15v3H6.500v7H1z" fill="#aeb9c0"/><rect x="7.700" y="8.500" width="1.800" height="5.500" fill="#62b543"/><rect x="10.500" y="6.500" width="1.800" height="7.500" fill="#9aa7b0"/><rect x="13.300" y="8.500" width="1.800" height="5.500" fill="#35a7de"/></svg>
<div class="t " style="left:83px;top:830px;font-size:13px;letter-spacing:-0.103px">Maven: antlr:antlr:2.7.7</div>
<svg style="left:48px;top:854px" width="6" height="10" viewBox="0 0 6 10"><path d="M0.7 0.7L5 5L0.7 9.3" fill="none" stroke="#767676" stroke-width="1.3"/></svg>
<svg style="left:64px;top:851px" width="16" height="16" viewBox="0 0 16 16"><path d="M1 2h4.500l1.800 2H15v3H6.500v7H1z" fill="#aeb9c0"/><rect x="7.700" y="8.500" width="1.800" height="5.500" fill="#62b543"/><rect x="10.500" y="6.500" width="1.800" height="7.500" fill="#9aa7b0"/><rect x="13.300" y="8.500" width="1.800" height="5.500" fill="#35a7de"/></svg>
<div class="t " style="left:83px;top:850px;font-size:13px;letter-spacing:-0.028px">Maven: ch.qos.logback:logback-classic:1.1.11</div>
<svg style="left:48px;top:874px" width="6" height="10" viewBox="0 0 6 10"><path d="M0.7 0.7L5 5L0.7 9.3" fill="none" stroke="#767676" stroke-width="1.3"/></svg>
<svg style="left:64px;top:871px" width="16" height="16" viewBox="0 0 16 16"><path d="M1 2h4.500l1.800 2H15v3H6.500v7H1z" fill="#aeb9c0"/><rect x="7.700" y="8.500" width="1.800" height="5.500" fill="#62b543"/><rect x="10.500" y="6.500" width="1.800" height="7.500" fill="#9aa7b0"/><rect x="13.300" y="8.500" width="1.800" height="5.500" fill="#35a7de"/></svg>
<div class="t " style="left:83px;top:870px;font-size:13px;letter-spacing:0.034px">Maven: ch.qos.logback:logback-core:1.1.11</div>
<svg style="left:48px;top:894px" width="6" height="10" viewBox="0 0 6 10"><path d="M0.7 0.7L5 5L0.7 9.3" fill="none" stroke="#767676" stroke-width="1.3"/></svg>
<svg style="left:64px;top:891px" width="16" height="16" viewBox="0 0 16 16"><path d="M1 2h4.500l1.800 2H15v3H6.500v7H1z" fill="#aeb9c0"/><rect x="7.700" y="8.500" width="1.800" height="5.500" fill="#62b543"/><rect x="10.500" y="6.500" width="1.800" height="7.500" fill="#9aa7b0"/><rect x="13.300" y="8.500" width="1.800" height="5.500" fill="#35a7de"/></svg>
<div class="t " style="left:83px;top:890px;font-size:13px;letter-spacing:-0.083px">Maven: com.alibaba:fastjson:1.2.83</div>
<svg style="left:48px;top:914px" width="6" height="10" viewBox="0 0 6 10"><path d="M0.7 0.7L5 5L0.7 9.3" fill="none" stroke="#767676" stroke-width="1.3"/></svg>
<svg style="left:64px;top:911px" width="16" height="16" viewBox="0 0 16 16"><path d="M1 2h4.500l1.800 2H15v3H6.500v7H1z" fill="#aeb9c0"/><rect x="7.700" y="8.500" width="1.800" height="5.500" fill="#62b543"/><rect x="10.500" y="6.500" width="1.800" height="7.500" fill="#9aa7b0"/><rect x="13.300" y="8.500" width="1.800" height="5.500" fill="#35a7de"/></svg>
<div class="t " style="left:83px;top:910px;font-size:13px;letter-spacing:-0.039px">Maven: com.fasterxml.jackson.core:jackson-annotations:2.8.0</div>
<svg style="left:48px;top:934px" width="6" height="10" viewBox="0 0 6 10"><path d="M0.7 0.7L5 5L0.7 9.3" fill="none" stroke="#767676" stroke-width="1.3"/></svg>
<svg style="left:64px;top:931px" width="16" height="16" viewBox="0 0 16 16"><path d="M1 2h4.500l1.800 2H15v3H6.500v7H1z" fill="#aeb9c0"/><rect x="7.700" y="8.500" width="1.800" height="5.500" fill="#62b543"/><rect x="10.500" y="6.500" width="1.800" height="7.500" fill="#9aa7b0"/><rect x="13.300" y="8.500" width="1.800" height="5.500" fill="#35a7de"/></svg>
<div class="t " style="left:83px;top:930px;font-size:13px;letter-spacing:-0.059px">Maven: com.fasterxml.jackson.core:jackson-core:2.8.9</div>
<svg style="left:48px;top:954px" width="6" height="10" viewBox="0 0 6 10"><path d="M0.7 0.7L5 5L0.7 9.3" fill="none" stroke="#767676" stroke-width="1.3"/></svg>
<svg style="left:64px;top:951px" width="16" height="16" viewBox="0 0 16 16"><path d="M1 2h4.500l1.800 2H15v3H6.500v7H1z" fill="#aeb9c0"/><rect x="7.700" y="8.500" width="1.800" height="5.500" fill="#62b543"/><rect x="10.500" y="6.500" width="1.800" height="7.500" fill="#9aa7b0"/><rect x="13.300" y="8.500" width="1.800" height="5.500" fill="#35a7de"/></svg>
<div class="t " style="left:83px;top:950px;font-size:13px;letter-spacing:-0.028px">Maven: com.fasterxml.jackson.core:jackson-databind:2.8.9</div>
</div>
<div class="a" style="left:437px;top:109px;width:10px;height:273px;background:rgba(0,0,0,0.10)"></div>
<div class="a" style="left:448px;top:82px;width:1450px;height:26px;background:#f2f2f2"></div>
<div class="hl" style="left:448px;top:108px;width:1450px;height:1px"></div>
<div class="a" style="left:457px;top:88.5px;width:14px;height:14px;border-radius:50%;background:#86cbe6;color:#41626f;font-family:'Liberation Sans',monospace;font-size:8.5px;line-height:14px;text-align:center;font-weight:normal">C</div><svg style="left:462px;top:87px" width="11" height="18" viewBox="0 0 11 18"><path d="M4.5 0L10 3.5L4.5 7z" fill="#4fb04f" stroke="#fff" stroke-width="0.8"/><circle cx="5.5" cy="12" r="3.4" fill="#e9eef1" stroke="#8a949c" stroke-width="1.1"/><path d="M5.5 10v2" stroke="#8a949c"/></svg>
<div class="t " style="left:477px;top:86px;font-size:13px;letter-spacing:-0.138px">OasysApplication.java</div>
<svg style="left:610px;top:92px" width="8" height="8" viewBox="0 0 8 8"><path d="M0.5 0.5L7.5 7.5M7.5 0.5L0.5 7.5" stroke="#b0b0b0" stroke-width="1"/></svg>
<svg style="left:633px;top:88px" width="16" height="16" viewBox="0 0 16 16"><text x="0" y="13" font-family="Liberation Sans,sans-serif" font-size="17" font-style="italic" font-weight="bold" fill="#5fb8e8" textLength="15" lengthAdjust="spacingAndGlyphs">m</text></svg>
<div class="t " style="left:654.5px;top:86px;font-size:13px;letter-spacing:-0.071px">pom.xml (oasys)</div>
<svg style="left:756px;top:92px" width="8" height="8" viewBox="0 0 8 8"><path d="M0.5 0.5L7.5 7.5M7.5 0.5L0.5 7.5" stroke="#b0b0b0" stroke-width="1"/></svg>
<svg style="left:780px;top:88px" width="16" height="16" viewBox="0 0 16 16"><path d="M8.500 1h4v7H4V5.500h4.500z" fill="#9aa7b0" opacity="0.8"/><path d="M7.500 1L4 4.500h3.500z" fill="#9aa7b0" opacity="0.5"/><rect x="0" y="8" width="16" height="8" fill="#f28b54"/><path d="M4.5 9.8L2.3 12L4.5 14.2M8.5 9.8L10.7 12L8.5 14.2" fill="none" stroke="#5a2a12" stroke-width="1.1" transform="translate(1.5,0)"/></svg>
<div class="t " style="left:800px;top:86px;font-size:13px;letter-spacing:0.157px">address-mapper.xml</div>
<svg style="left:928px;top:92px" width="8" height="8" viewBox="0 0 8 8"><path d="M0.5 0.5L7.5 7.5M7.5 0.5L0.5 7.5" stroke="#b0b0b0" stroke-width="1"/></svg>
<div class="a" style="left:952px;top:89px;width:14px;height:14px;border-radius:50%;background:#8dc891;color:#2d5c33;font-family:'Liberation Mono',monospace;font-size:9px;line-height:14px;text-align:center;font-weight:bold">I</div>
<div class="t " style="left:972px;top:86px;font-size:13px;letter-spacing:0.082px">AddressMapper.java</div>
<svg style="left:1100px;top:92px" width="8" height="8" viewBox="0 0 8 8"><path d="M0.5 0.5L7.5 7.5M7.5 0.5L0.5 7.5" stroke="#b0b0b0" stroke-width="1"/></svg>
<div class="a" style="left:1115px;top:82px;width:170px;height:26px;background:#fff"></div>
<div class="a" style="left:1115px;top:106px;width:170px;height:3px;background:#4083c9"></div>
<div class="a" style="left:1126px;top:89px;width:13.0px;height:13.0px;border-radius:50%;background:#86cbe6;color:#41626f;font-family:'Liberation Sans',monospace;font-size:8.5px;line-height:13.0px;text-align:center;font-weight:normal">C</div>
<div class="t " style="left:1144px;top:86px;font-size:13px;letter-spacing:0.113px">AddrController.java</div>
<svg style="left:1264px;top:92px" width="8" height="8" viewBox="0 0 8 8"><path d="M0.5 0.5L7.5 7.5M7.5 0.5L0.5 7.5" stroke="#b0b0b0" stroke-width="1"/></svg>
<div class="a" style="left:1885px;top:89px;width:3px;height:3px;border-radius:50%;background:#6e6e6e"></div>
<div class="a" style="left:1885px;top:93.7px;width:3px;height:3px;border-radius:50%;background:#6e6e6e"></div>
<div class="a" style="left:1885px;top:98.5px;width:3px;height:3px;border-radius:50%;background:#6e6e6e"></div>
<div class="a" id="ed" style="left:448px;top:109px;width:1450px;height:851px;background:#fff;overflow:hidden"></div>
<div class="a" style="left:448px;top:109px;width:66px;height:851px;background:#f2f2f2"></div>
<div class="a" style="left:513px;top:109px;width:1px;height:851px;background:#d4d4d4"></div>
<div class="a" style="left:1479px;top:109px;width:1px;height:851px;background:#e4e4e4"></div>
<div class="a" style="left:514px;top:576px;width:1384px;height:22px;background:#fcfaed"></div>
<div class="a" style="left:448px;top:576px;width:65px;height:22px;background:#fcfaed"></div>
<div class="a" style="left:0;top:109px;width:1898px;height:851px;overflow:hidden"><div class="a" style="left:0;top:-109px">
<div class="a" style="left:550px;top:290px;width:1px;height:550px;background:#e2e2e2"></div>
<div class="a" style="left:582px;top:510px;width:1px;height:22px;background:#e2e2e2"></div>
<div class="lnum" style="top:136px">476</div>
<div class="lnum" style="top:158px">477</div>
<div class="cl" style="top:158px">    <span class="c">/**</span></div>
<div class="lnum" style="top:180px">478</div>
<div class="cl" style="top:180px">     <span class="c"><span style="font-family:'Noto Serif CJK SC',serif;font-style:italic;font-size:13px">外部通讯录</span></span></div>
<div class="lnum" style="top:202px">479</div>
<div class="cl" style="top:202px">     <span class="c">* </span><span class="c" style="background:#f6ebc8;text-decoration:underline;color:#8c8c8c;display:inline-block;height:22px;vertical-align:top;margin-top:-1px;padding-top:1px">@return</span></div>
<div class="lnum" style="top:224px">480</div>
<div class="cl" style="top:224px">     <span class="c">*/</span></div>
<div class="lnum" style="top:246px">481</div>
<div class="cl" style="top:246px">    <span class="an">@RequestMapping</span>(<span class="hint" style="width:22px"><b style="left:0px;width:21px"></b><svg style="left:2px;top:4px" width="19" height="12" viewBox="0 0 19 12"><circle cx="5.500" cy="5.500" r="5" fill="#8a9096"/><path d="M2 3.500c1.500-1 2.500 0 3 1s-0.500 2-1.500 2.500s-1.500 0.500-2-1zM6.500 1.500c1 0 2.500 1 2.500 2s-1 0.500-1.800 0.300s-1.200-1.300-0.700-2.300zM6 7c1-0.500 2.500 0 2.500 1s-1.500 2-2.500 1.500s-0.500-2 0-2.500z" fill="#f4f4f4"/><path d="M12.500 4L15 6.500L17.500 4" fill="none" stroke="#8a9096" stroke-width="1.100"/></svg></span><span class="s">"<span class="w">outaddresspaging</span>"</span>)</div>
<div class="lnum" style="top:268px">482</div>
<div class="cl" style="top:268px">    <span class="k">public</span> String <span class="m">outAddress</span>(<span class="an">@RequestParam</span>(value=<span class="s">"<span class="u">pageNum</span>"</span>,defaultValue=<span class="s">"1"</span>) <span class="k">int</span> page,Model model,</div>
<div class="lnum" style="top:290px">483</div>
<div class="cl" style="top:290px">            <span class="an">@RequestParam</span>(value=<span class="s">"<span class="u">baseKey</span>"</span>,required=<span class="k">false</span>) String baseKey,</div>
<div class="lnum" style="top:312px">484</div>
<div class="cl" style="top:312px">            <span class="an">@RequestParam</span>(value=<span class="s">"<span class="w">outtype</span>"</span>,required=<span class="k">false</span>) String <span class="w">outtype</span>,</div>
<div class="lnum" style="top:334px">485</div>
<div class="cl" style="top:334px">            <span class="an">@RequestParam</span>(value=<span class="s">"<span class="w">alph</span>"</span>,defaultValue=<span class="s">"ALL"</span>) String <span class="w">alph</span>,</div>
<div class="lnum" style="top:356px">486</div>
<div class="cl" style="top:356px">            <span class="an">@SessionAttribute</span>(<span class="s">"userId"</span>) Long userId</div>
<div class="lnum" style="top:378px">487</div>
<div class="cl" style="top:378px">            ){</div>
<div class="lnum" style="top:400px">488</div>
<div class="cl" style="top:400px">        PageHelper.<span class="i">startPage</span>(page, <span class="hint" style="width:70px"><b style="left:2px;width:64px">pageSize:</b></span><span class="n">10</span>);</div>
<div class="lnum" style="top:422px">489</div>
<div class="cl" style="top:422px">        List&lt;Map&lt;String, Object&gt;&gt; directors=<span class="f">am</span>.allDirector(userId, alph, outtype, baseKey);</div>
<div class="lnum" style="top:444px">490</div>
<div class="cl" style="top:444px">        List&lt;Map&lt;String, Object&gt;&gt; adds=<span class="f">addressService</span>.fengzhaung(directors);</div>
<div class="lnum" style="top:466px">491</div>
<div class="cl" style="top:466px">        PageInfo&lt;Map&lt;String, Object&gt;&gt; pageinfo=<span class="k">new</span> PageInfo&lt;&gt;(directors);</div>
<div class="lnum" style="top:488px">492</div>
<div class="cl" style="top:488px">        <span class="k">if</span>(!StringUtils.<span class="i">isEmpty</span>(outtype)){</div>
<div class="lnum" style="top:510px">493</div>
<div class="cl" style="top:510px">            model.addAttribute(<span class="hint" style="width:24px"><b style="left:3px;width:18px">s:</b></span><span class="s">"<span class="w">outtype</span>"</span>, outtype);</div>
<div class="lnum" style="top:532px">494</div>
<div class="cl" style="top:532px">        }</div>
<div class="lnum" style="top:554px">495</div>
<div class="cl" style="top:554px">        <span class="wg">Pageable pa=<span class="k">new</span> PageRequest(</span><span class="hint" style="width:48px"><b style="left:2px;width:42px">page:</b></span><span class="wg"><span class="n">0</span>, </span><span class="hint" style="width:38px"><b style="left:1px;width:33px">size:</b></span><span class="wg"><span class="n">10</span>);</span></div>
<div class="lnum" style="top:576px">496</div>
<div class="lnum" style="top:598px">497</div>
<div class="cl" style="top:598px">        Page&lt;User&gt; userspage=<span class="f">uDao</span>.findAll(pa);</div>
<div class="lnum" style="top:620px">498</div>
<div class="cl" style="top:620px">        List&lt;User&gt; users=userspage.getContent();</div>
<div class="lnum" style="top:642px">499</div>
<div class="cl" style="top:642px">        model.addAttribute(<span class="hint" style="width:24px"><b style="left:3px;width:18px">s:</b></span><span class="s">"<span class="w">modalurl</span>"</span>, <span class="hint" style="width:25px"><b style="left:1px;width:20px">o:</b></span><span class="s">"<span class="w">modalpaging</span>"</span>);</div>
<div class="lnum" style="top:664px">500</div>
<div class="cl" style="top:664px">        model.addAttribute(<span class="hint" style="width:24px"><b style="left:3px;width:18px">s:</b></span><span class="s">"<span class="w">modalpage</span>"</span>, userspage);</div>
<div class="lnum" style="top:686px">501</div>
<div class="cl" style="top:686px">        model.addAttribute(<span class="hint" style="width:24px"><b style="left:3px;width:18px">s:</b></span><span class="s">"users"</span>, users);</div>
<div class="lnum" style="top:708px">502</div>
<div class="cl" style="top:708px">        model.addAttribute(<span class="hint" style="width:24px"><b style="left:3px;width:18px">s:</b></span><span class="s">"userId"</span>, userId);</div>
<div class="lnum" style="top:730px">503</div>
<div class="cl" style="top:730px">        model.addAttribute(<span class="hint" style="width:24px"><b style="left:3px;width:18px">s:</b></span><span class="s">"baseKey"</span>, baseKey);</div>
<div class="lnum" style="top:752px">504</div>
<div class="cl" style="top:752px">        model.addAttribute(<span class="hint" style="width:24px"><b style="left:3px;width:18px">s:</b></span><span class="s">"directors"</span>, adds);</div>
<div class="lnum" style="top:774px">505</div>
<div class="cl" style="top:774px">        model.addAttribute(<span class="hint" style="width:24px"><b style="left:3px;width:18px">s:</b></span><span class="s">"page"</span>, pageinfo);</div>
<div class="lnum" style="top:796px">506</div>
<div class="cl" style="top:796px">        model.addAttribute(<span class="hint" style="width:24px"><b style="left:3px;width:18px">s:</b></span><span class="s">"url"</span>, <span class="hint" style="width:25px"><b style="left:1px;width:20px">o:</b></span><span class="s">"<span class="w">outaddresspaging</span>"</span>);</div>
<div class="lnum" style="top:818px">507</div>
<div class="cl" style="top:818px">        <span class="k">return</span> <span class="s">"<span class="u">address/<span class="w">outaddrss</span></span>"</span>;</div>
<div class="lnum" style="top:840px">508</div>
<div class="cl" style="top:840px">    }</div>
<div class="lnum" style="top:862px">509</div>
<div class="lnum" style="top:884px">510</div>
<div class="cl" style="top:884px">    <span class="c">/**</span></div>
<div class="lnum" style="top:906px">511</div>
<div class="cl" style="top:906px">     <span class="c">* <span style="font-family:'Noto Serif CJK SC',serif;font-style:italic;font-size:13px">内部通讯录表格，并处理分页</span></span></div>
<div class="lnum" style="top:928px">512</div>
<div class="cl" style="top:928px">     <span class="c">* </span><span class="c" style="background:#f6ebc8;text-decoration:underline;color:#8c8c8c;display:inline-block;height:22px;vertical-align:top;margin-top:-1px;padding-top:1px">@return</span></div>
<div class="lnum" style="top:950px">513</div>
<div class="cl" style="top:950px">     <span class="c">*/</span></div>
<svg style="left:509px;top:165px" width="9" height="11" viewBox="0 0 9 11"><path d="M0.5 0.5h8v6.500L4.500 10.500L0.500 7z" fill="#fff" stroke="#c4c4c4"/><path d="M2.500 4h4" stroke="#b0b0b0"/></svg>
<svg style="left:509px;top:229px" width="9" height="11" viewBox="0 0 9 11"><path d="M0.5 10.5h8v-6.500L4.500 0.500L0.500 4z" fill="#fff" stroke="#c4c4c4"/><path d="M2.500 7h4" stroke="#b0b0b0"/></svg>
<svg style="left:509px;top:385px" width="9" height="11" viewBox="0 0 9 11"><path d="M0.5 0.5h8v6.500L4.500 10.500L0.500 7z" fill="#fff" stroke="#c4c4c4"/><path d="M2.500 4h4" stroke="#b0b0b0"/></svg>
<svg style="left:509px;top:495px" width="9" height="11" viewBox="0 0 9 11"><path d="M0.5 0.5h8v6.500L4.500 10.500L0.500 7z" fill="#fff" stroke="#c4c4c4"/><path d="M2.500 4h4" stroke="#b0b0b0"/></svg>
<svg style="left:509px;top:537px" width="9" height="11" viewBox="0 0 9 11"><path d="M0.5 10.5h8v-6.500L4.500 0.500L0.500 4z" fill="#fff" stroke="#c4c4c4"/><path d="M2.500 7h4" stroke="#b0b0b0"/></svg>
<svg style="left:509px;top:845px" width="9" height="11" viewBox="0 0 9 11"><path d="M0.5 10.5h8v-6.500L4.500 0.500L0.500 4z" fill="#fff" stroke="#c4c4c4"/><path d="M2.500 7h4" stroke="#b0b0b0"/></svg>
<svg style="left:509px;top:891px" width="9" height="11" viewBox="0 0 9 11"><path d="M0.5 0.5h8v6.500L4.500 10.500L0.500 7z" fill="#fff" stroke="#c4c4c4"/><path d="M2.500 4h4" stroke="#b0b0b0"/></svg>
<svg style="left:509px;top:955px" width="9" height="11" viewBox="0 0 9 11"><path d="M0.5 10.5h8v-6.500L4.500 0.500L0.500 4z" fill="#fff" stroke="#c4c4c4"/><path d="M2.500 7h4" stroke="#b0b0b0"/></svg>
<svg style="left:480px;top:271px" width="18" height="16" viewBox="0 0 18 16"><path d="M1 10C1 5 5 3.5 9 3.5C11.5 3.5 13 2.5 14 0.5C15.5 4 15 8 12 10.5C9 13 4 12.5 2.5 11z" fill="#8dc891"/><circle cx="11.5" cy="10.5" r="4.2" fill="#f2f2f2" stroke="#8a8f96" stroke-width="1.3"/><path d="M11.5 8v2.5M9.8 9.3a2.2 2.2 0 1 0 3.4 0" fill="none" stroke="#8a8f96" stroke-width="1"/></svg>
</div></div>
<div class="a" style="left:448px;top:131px;width:1450px;height:8px;background:linear-gradient(#e6e6e6,rgba(255,255,255,0))"></div>
<div class="a" style="left:448px;top:131px;width:1450px;height:1px;background:#dfdfdf"></div>
<div class="a" style="left:514px;top:109px;width:1384px;height:22px;background:#fff"></div>
<div class="a" style="left:448px;top:109px;width:65px;height:22px;background:#f2f2f2"></div>
<div class="lnum" style="top:109px">59</div>
<div class="cl" style="top:109px"><span class="k">public</span> <span class="k">class</span> AddrController {</div>
<div class="a" style="left:1728px;top:109px;width:170px;height:28px;background:#fff;border-radius:0 0 0 4px"></div>
<svg style="left:1747px;top:116px" width="12" height="11" viewBox="0 0 12 11"><path d="M6 0L12 11H0z" fill="#e9bd17"/><path d="M6 4v3.5M6 8.500v1.500" stroke="#fff" stroke-width="1.4"/></svg>
<div class="t " style="left:1762px;top:113px;font-size:12.5px;color:#6e6e6e">27</div>
<svg style="left:1784px;top:116px" width="12" height="11" viewBox="0 0 12 11"><path d="M6 0L12 11H0z" fill="#d9cfa9"/><path d="M6 4v3.5M6 8.500v1.500" stroke="#fff" stroke-width="1.4"/></svg>
<div class="t " style="left:1799px;top:113px;font-size:12.5px;color:#6e6e6e">14</div>
<svg style="left:1821px;top:117px" width="12" height="12" viewBox="0 0 12 12"><path d="M1.200 4.500L4.200 7.500L10.800 1" fill="none" stroke="#4ea65a" stroke-width="2.200"/><path d="M0.300 10.800l1.900-1.500l1.900 1.500l1.900-1.500l1.900 1.500l1.900-1.500" fill="none" stroke="#4ea65a" stroke-width="0.900"/></svg>
<div class="t " style="left:1836px;top:113px;font-size:12.5px;color:#6e6e6e">86</div>
<svg style="left:1860px;top:119px" width="10" height="6" viewBox="0 0 10 6"><path d="M0.700 5.300L5 1L9.300 5.300" fill="none" stroke="#6e6e6e" stroke-width="1.400"/></svg>
<svg style="left:1881px;top:119px" width="10" height="6" viewBox="0 0 10 6"><path d="M0.700 0.700L5 5L9.300 0.700" fill="none" stroke="#6e6e6e" stroke-width="1.400"/></svg>
<div class="a" style="left:1884px;top:138px;width:14px;height:2px;background:#e9c200"></div>
<div class="a" style="left:1884px;top:148px;width:14px;height:2px;background:#d9d2ad"></div>
<div class="a" style="left:1884px;top:151px;width:14px;height:2px;background:#d9d2ad"></div>
<div class="a" style="left:1884px;top:154px;width:14px;height:2px;background:#d9d2ad"></div>
<div class="a" style="left:1884px;top:157px;width:14px;height:2px;background:#d9d2ad"></div>
<div class="a" style="left:1884px;top:160px;width:14px;height:2px;background:#d9d2ad"></div>
<div class="a" style="left:1884px;top:163px;width:14px;height:2px;background:#d9d2ad"></div>
<div class="a" style="left:1884px;top:166px;width:14px;height:2px;background:#d9d2ad"></div>
<div class="a" style="left:1884px;top:169px;width:14px;height:2px;background:#d9d2ad"></div>
<div class="a" style="left:1884px;top:172px;width:14px;height:2px;background:#d9d2ad"></div>
<div class="a" style="left:1884px;top:175px;width:14px;height:2px;background:#d9d2ad"></div>
<div class="a" style="left:1884px;top:178px;width:14px;height:2px;background:#d9d2ad"></div>
<div class="a" style="left:1884px;top:181px;width:14px;height:2px;background:#d9d2ad"></div>
<div class="a" style="left:1884px;top:184px;width:14px;height:2px;background:#d9d2ad"></div>
<div class="a" style="left:1884px;top:192px;width:14px;height:9px;background:#e9c200"></div>
<div class="a" style="left:1884px;top:266px;width:14px;height:7px;background:#e9c200"></div>
<div class="a" style="left:1884px;top:354px;width:14px;height:2px;background:#e9c200"></div>
<div class="a" style="left:1884px;top:359px;width:14px;height:2px;background:#e9c200"></div>
<div class="a" style="left:1884px;top:395px;width:14px;height:2px;background:#e9c200"></div>
<div class="a" style="left:1884px;top:401px;width:14px;height:2px;background:#e9c200"></div>
<div class="a" style="left:1884px;top:407px;width:14px;height:2px;background:#e9c200"></div>
<div class="a" style="left:1884px;top:474px;width:14px;height:2px;background:#e9c200"></div>
<div class="a" style="left:1884px;top:714px;width:14px;height:2px;background:#e9c200"></div>
<div class="a" style="left:1884px;top:752px;width:14px;height:2px;background:#e9c200"></div>
<div class="a" style="left:1884px;top:773px;width:14px;height:2px;background:#d9d2ad"></div>
<div class="a" style="left:1888px;top:828px;width:10px;height:62px;background:rgba(0,0,0,0.12)"></div>
<div class="a" style="left:1884px;top:834px;width:14px;height:2px;background:#e9c200"></div>
<div class="a" style="left:1884px;top:860px;width:14px;height:2px;background:#d9d2ad"></div>
<div class="a" style="left:1884px;top:888px;width:14px;height:2px;background:#e9c200"></div>
<div class="a" style="left:1898px;top:82px;width:22px;height:907px;background:#f2f2f2"></div>
<div class="vl" style="left:1898px;top:82px;height:907px"></div>
<svg style="left:1903.500px;top:90.500px" width="14" height="14" viewBox="0 0 14 14"><path d="M6 1.500c-2.500 0-4 2-4 4.500v3L0.500 11h11L10 9V6c0-2.500-1.500-4.500-4-4.500z" fill="#6e6e6e"/><path d="M4.500 12h3L6 13.500z" fill="#6e6e6e"/><circle cx="11" cy="3" r="2.600" fill="#389fd6"/></svg>
<div class="a" style="left:1909px;top:119px;width:0;height:0"><div class="a" style="left:0;top:0;transform:translate(-50%,-50%) rotate(90deg);white-space:pre;font-size:11px;line-height:14px">通知</div></div>
<svg style="left:1903.500px;top:151.500px" width="12" height="12" viewBox="0 0 12 12"><path d="M6 8.300A2.300 2.300 0 1 1 8.300 6C8.300 9.200 4.800 10.600 2.500 8.800A4.900 4.900 0 1 1 10.900 5.500" fill="none" stroke="#6e6e6e" stroke-width="1.200"/></svg>
<div class="a" style="left:1909px;top:210.5px;width:0;height:0"><div class="a" style="left:0;top:0;transform:translate(-50%,-50%) rotate(90deg);white-space:pre;font-size:11px;line-height:14px">安装 AI Assistant</div></div>
<svg style="left:1903px;top:276px" width="13" height="13" viewBox="0 0 13 13"><path d="M1 2.500C1 -0.300 12 -0.300 12 2.500V10.500C12 13.300 1 13.300 1 10.500z" fill="#6e6e6e"/><path d="M1 4.200C1 6.600 12 6.600 12 4.200M1 7C1 9.400 12 9.400 12 7" fill="none" stroke="#f2f2f2" stroke-width="1"/></svg>
<div class="a" style="left:1909px;top:308.5px;width:0;height:0"><div class="a" style="left:0;top:0;transform:translate(-50%,-50%) rotate(90deg);white-space:pre;font-size:11px;line-height:14px">数据库</div></div>
<svg style="left:1903px;top:346px" width="13" height="13" viewBox="0 0 13 13"><circle cx="6.500" cy="2.500" r="2.300" fill="#6e6e6e"/><circle cx="2.500" cy="10.500" r="2.300" fill="#6e6e6e"/><circle cx="10.500" cy="10.500" r="2.300" fill="#6e6e6e"/><path d="M6.500 2.500L2.500 10.500M6.500 2.500L10.500 10.500" stroke="#6e6e6e" stroke-width="1.200"/></svg>
<div class="a" style="left:1909px;top:374px;width:0;height:0"><div class="a" style="left:0;top:0;transform:translate(-50%,-50%) rotate(90deg);white-space:pre;font-size:11px;line-height:14px">端点</div></div>
<div class="a" style="left:1902px;top:399px;font-family:'Liberation Sans',sans-serif;font-style:italic;font-weight:bold;font-size:15px;line-height:20px;color:#6e6e6e">m</div>
<div class="a" style="left:1909px;top:439.5px;width:0;height:0"><div class="a" style="left:0;top:0;transform:translate(-50%,-50%) rotate(90deg);white-space:pre;font-size:11px;line-height:14px">Maven</div></div>
<svg style="left:1904px;top:929px" width="11" height="12" viewBox="0 0 11 12"><path d="M0.500 0.500h10v6c0 3-2.500 4.500-5 5.500c-2.500-1-5-2.500-5-5.500z" fill="#6e6e6e"/><path d="M5.500 1.500h4v5c0 2.300-2 3.500-4 4.300z" fill="#f2f2f2"/></svg>
<div class="a" style="left:1909px;top:962px;width:0;height:0"><div class="a" style="left:0;top:0;transform:translate(-50%,-50%) rotate(90deg);white-space:pre;font-size:11px;line-height:14px">覆盖率</div></div>
<div class="hl" style="left:22px;top:959px;width:1876px;height:1px"></div>
<div class="a" style="left:22px;top:960px;width:1876px;height:27px;background:#f2f2f2"></div>
<div class="t " style="left:28px;top:964px;font-size:12px">运行:</div>
<svg style="left:74px;top:965px" width="18" height="16" viewBox="0 0 18 16"><path d="M1 10C1 5 5 3.5 9 3.5C11.5 3.5 13 2.5 14 0.5C15.5 4 15 8 12 10.5C9 13 4 12.5 2.5 11z" fill="#8dc891"/><circle cx="11.5" cy="10.5" r="4.2" fill="#f2f2f2" stroke="#8a8f96" stroke-width="1.3"/><path d="M11.5 8v2.5M9.8 9.3a2.2 2.2 0 1 0 3.4 0" fill="none" stroke="#8a8f96" stroke-width="1"/><circle cx="14.5" cy="13.2" r="2.3" fill="#1fd12c"/></svg>
<div class="t " style="left:94.3px;top:964px;font-size:13px;letter-spacing:-0.066px">OasysApplication</div>
<svg style="left:201px;top:969px" width="8" height="8" viewBox="0 0 8 8"><path d="M0.5 0.5L7.5 7.5M7.5 0.5L0.5 7.5" stroke="#b0b0b0" stroke-width="1"/></svg>
<div class="a" style="left:62px;top:984px;width:158px;height:3px;background:#a4b3cf;border-radius:2px"></div>
<svg style="left:1852px;top:966.5px" width="13" height="13" viewBox="0 0 14 14"><g fill="#6e6e6e"><circle cx="7" cy="7" r="4.8"/><rect x="5.4" y="0" width="3.2" height="14" rx="0.6" transform="rotate(0 7 7)"/><rect x="5.4" y="0" width="3.2" height="14" rx="0.6" transform="rotate(60 7 7)"/><rect x="5.4" y="0" width="3.2" height="14" rx="0.6" transform="rotate(120 7 7)"/></g><circle cx="7" cy="7" r="2.2" fill="#f2f2f2"/></svg>
<div class="a" style="left:1879px;top:972px;width:12px;height:2px;background:#6e6e6e"></div>
<div class="hl" style="left:22px;top:987px;width:1876px;height:1px;background:#e2e2e2"></div>
<div class="hl" style="left:0px;top:989px;width:1920px;height:1px"></div>
<div class="a" style="left:0;top:990px;width:1920px;height:22px;background:#f2f2f2"></div>
<div class="a" style="left:103px;top:990px;width:57px;height:21px;background:#c6c6c6"></div>
<div class="hl" style="left:0px;top:1011px;width:1920px;height:1px"></div>
<svg style="left:34px;top:995px" width="9" height="12" viewBox="0 0 9 12"><circle cx="2" cy="2" r="1.600" fill="#6e6e6e"/><circle cx="7" cy="3" r="1.600" fill="#6e6e6e"/><path d="M2 2v10M7 3c0 3-5 3-5 5" fill="none" stroke="#6e6e6e" stroke-width="1.400"/></svg>
<div class="t " style="left:49px;top:992px;font-size:11px">版本控制</div>
<svg style="left:114px;top:995px" width="14" height="13" viewBox="0 0 14 13"><path d="M1 0.500L9.500 5.500L1 10.500z" fill="#6e6e6e"/><circle cx="10.500" cy="10" r="2.200" fill="#1fd12c"/></svg>
<div class="t " style="left:130px;top:992px;font-size:11px">运行</div>
<svg style="left:171px;top:996px" width="11" height="9" viewBox="0 0 11 9"><path d="M0 1h2M3.500 1H11M0 4.500h2M3.500 4.500H11M0 8h2M3.500 8H11" stroke="#6e6e6e" stroke-width="1.400"/></svg>
<div class="t " style="left:187px;top:992px;font-size:11.5px">TODO</div>
<svg style="left:239px;top:995px" width="11" height="11" viewBox="0 0 11 11"><circle cx="5.500" cy="5.500" r="5.500" fill="#6e6e6e"/><path d="M5.500 2.500v3.500M5.500 7.500v1.500" stroke="#f2f2f2" stroke-width="1.600"/></svg>
<div class="t " style="left:255px;top:992px;font-size:11px">问题</div>
<svg style="left:296px;top:996px" width="11" height="10" viewBox="0 0 11 10"><rect width="11" height="10" fill="#6e6e6e"/><path d="M2 2.500L4.500 5L2 7.500M5.500 7.500h3.500" fill="none" stroke="#f2f2f2" stroke-width="1.200"/></svg>
<div class="t " style="left:312px;top:992px;font-size:11px">终端</div>
<svg style="left:352px;top:994px" width="14" height="13" viewBox="0 0 14 13"><path d="M10 4A5 5 0 1 0 6 11" fill="none" stroke="#6e6e6e" stroke-width="1.400"/><path d="M5.500 3V6.500L7.500 8" fill="none" stroke="#6e6e6e" stroke-width="1.100"/><path d="M8 6.500L13.500 10L8 13z" fill="#6e6e6e"/></svg>
<div class="t " style="left:369px;top:992px;font-size:11px">分析器</div>
<svg style="left:422px;top:995px" width="12" height="12" viewBox="0 0 12 12"><path d="M3.500 0h5L12 3.500v5L8.500 12h-5L0 8.500v-5z" fill="#6e6e6e"/><path d="M4.500 3.200L9 6L4.500 8.800z" fill="#f2f2f2"/></svg>
<div class="t " style="left:439px;top:992px;font-size:11px">服务</div>
<svg style="left:479px;top:995px" width="13" height="12" viewBox="0 0 13 12"><path d="M0.500 4L5 0.500L7.500 2.500L6.500 3.500L12.500 10L11 11.500L5 5L3.500 6.300z" fill="#6e6e6e"/></svg>
<div class="t " style="left:496px;top:992px;font-size:11px">构建</div>
<svg style="left:537px;top:995px" width="13" height="13" viewBox="0 0 13 13"><ellipse cx="6" cy="2.200" rx="5.500" ry="2" fill="#6e6e6e"/><path d="M0.500 4c0 2.500 11 2.500 11 0v1.500c0 2.500-11 2.500-11 0zM0.500 7c0 2.500 11 2.500 11 0v1.500c0 2.500-11 2.500-11 0z" fill="#6e6e6e"/><path d="M6.500 10.500L8.500 12.500L12.500 8.500" fill="none" stroke="#6e6e6e" stroke-width="1.300"/></svg>
<div class="t " style="left:554px;top:992px;font-size:11px">数据库更改</div>
<div class="a" style="left:0;top:1013px;width:1920px;height:19px;background:#f2f2f2"></div>
<svg style="left:12px;top:1015px" width="13" height="13" viewBox="0 0 13 13"><path d="M0.500 3.500v9h9" fill="none" stroke="#6e6e6e"/><rect x="2.500" y="0.500" width="10" height="10" fill="none" stroke="#6e6e6e"/></svg>
<div class="t " style="left:38.5px;top:1013px;font-size:12px;letter-spacing:0.065px">所有文件都处于最新状态 (片刻之前)</div>
<div class="t " style="left:1714px;top:1012.5px;font-size:12px;letter-spacing:0.154px">496:9</div>
<div class="t " style="left:1757px;top:1012.5px;font-size:12px;letter-spacing:-0.836px">CRLF</div>
<div class="t " style="left:1797px;top:1012.5px;font-size:12px;letter-spacing:0.0px">UTF-8</div>
<div class="t " style="left:1843px;top:1012.5px;font-size:12px;letter-spacing:0.032px">制表符*</div>
<svg style="left:1895px;top:1015.500px" width="11" height="11.500" viewBox="0 0 12 13"><rect x="3" y="6" width="9" height="7" fill="#6e6e6e"/><path d="M1 6V3.500a2.500 2.500 0 0 1 5 0V6" fill="none" stroke="#6e6e6e" stroke-width="1.400"/></svg>
<div class="a" style="left:954px;top:515px;width:0;height:0"><div class="a" style="transform:translate(-50%,-50%) rotate(-41.500deg);white-space:pre;font-size:48px;color:rgba(0,0,0,0.05);line-height:54px">SecHub-下</div></div>
<div class="red" style="left:1120px;top:81px;width:165px;height:28px"></div>
<div class="red" style="left:591px;top:334px;width:517px;height:24px"></div>
<div class="red" style="left:570px;top:417px;width:730px;height:34px"></div>
<div class="red" style="left:1043px;top:426px;width:60.500px;height:17.500px"></div>
</body></html>
